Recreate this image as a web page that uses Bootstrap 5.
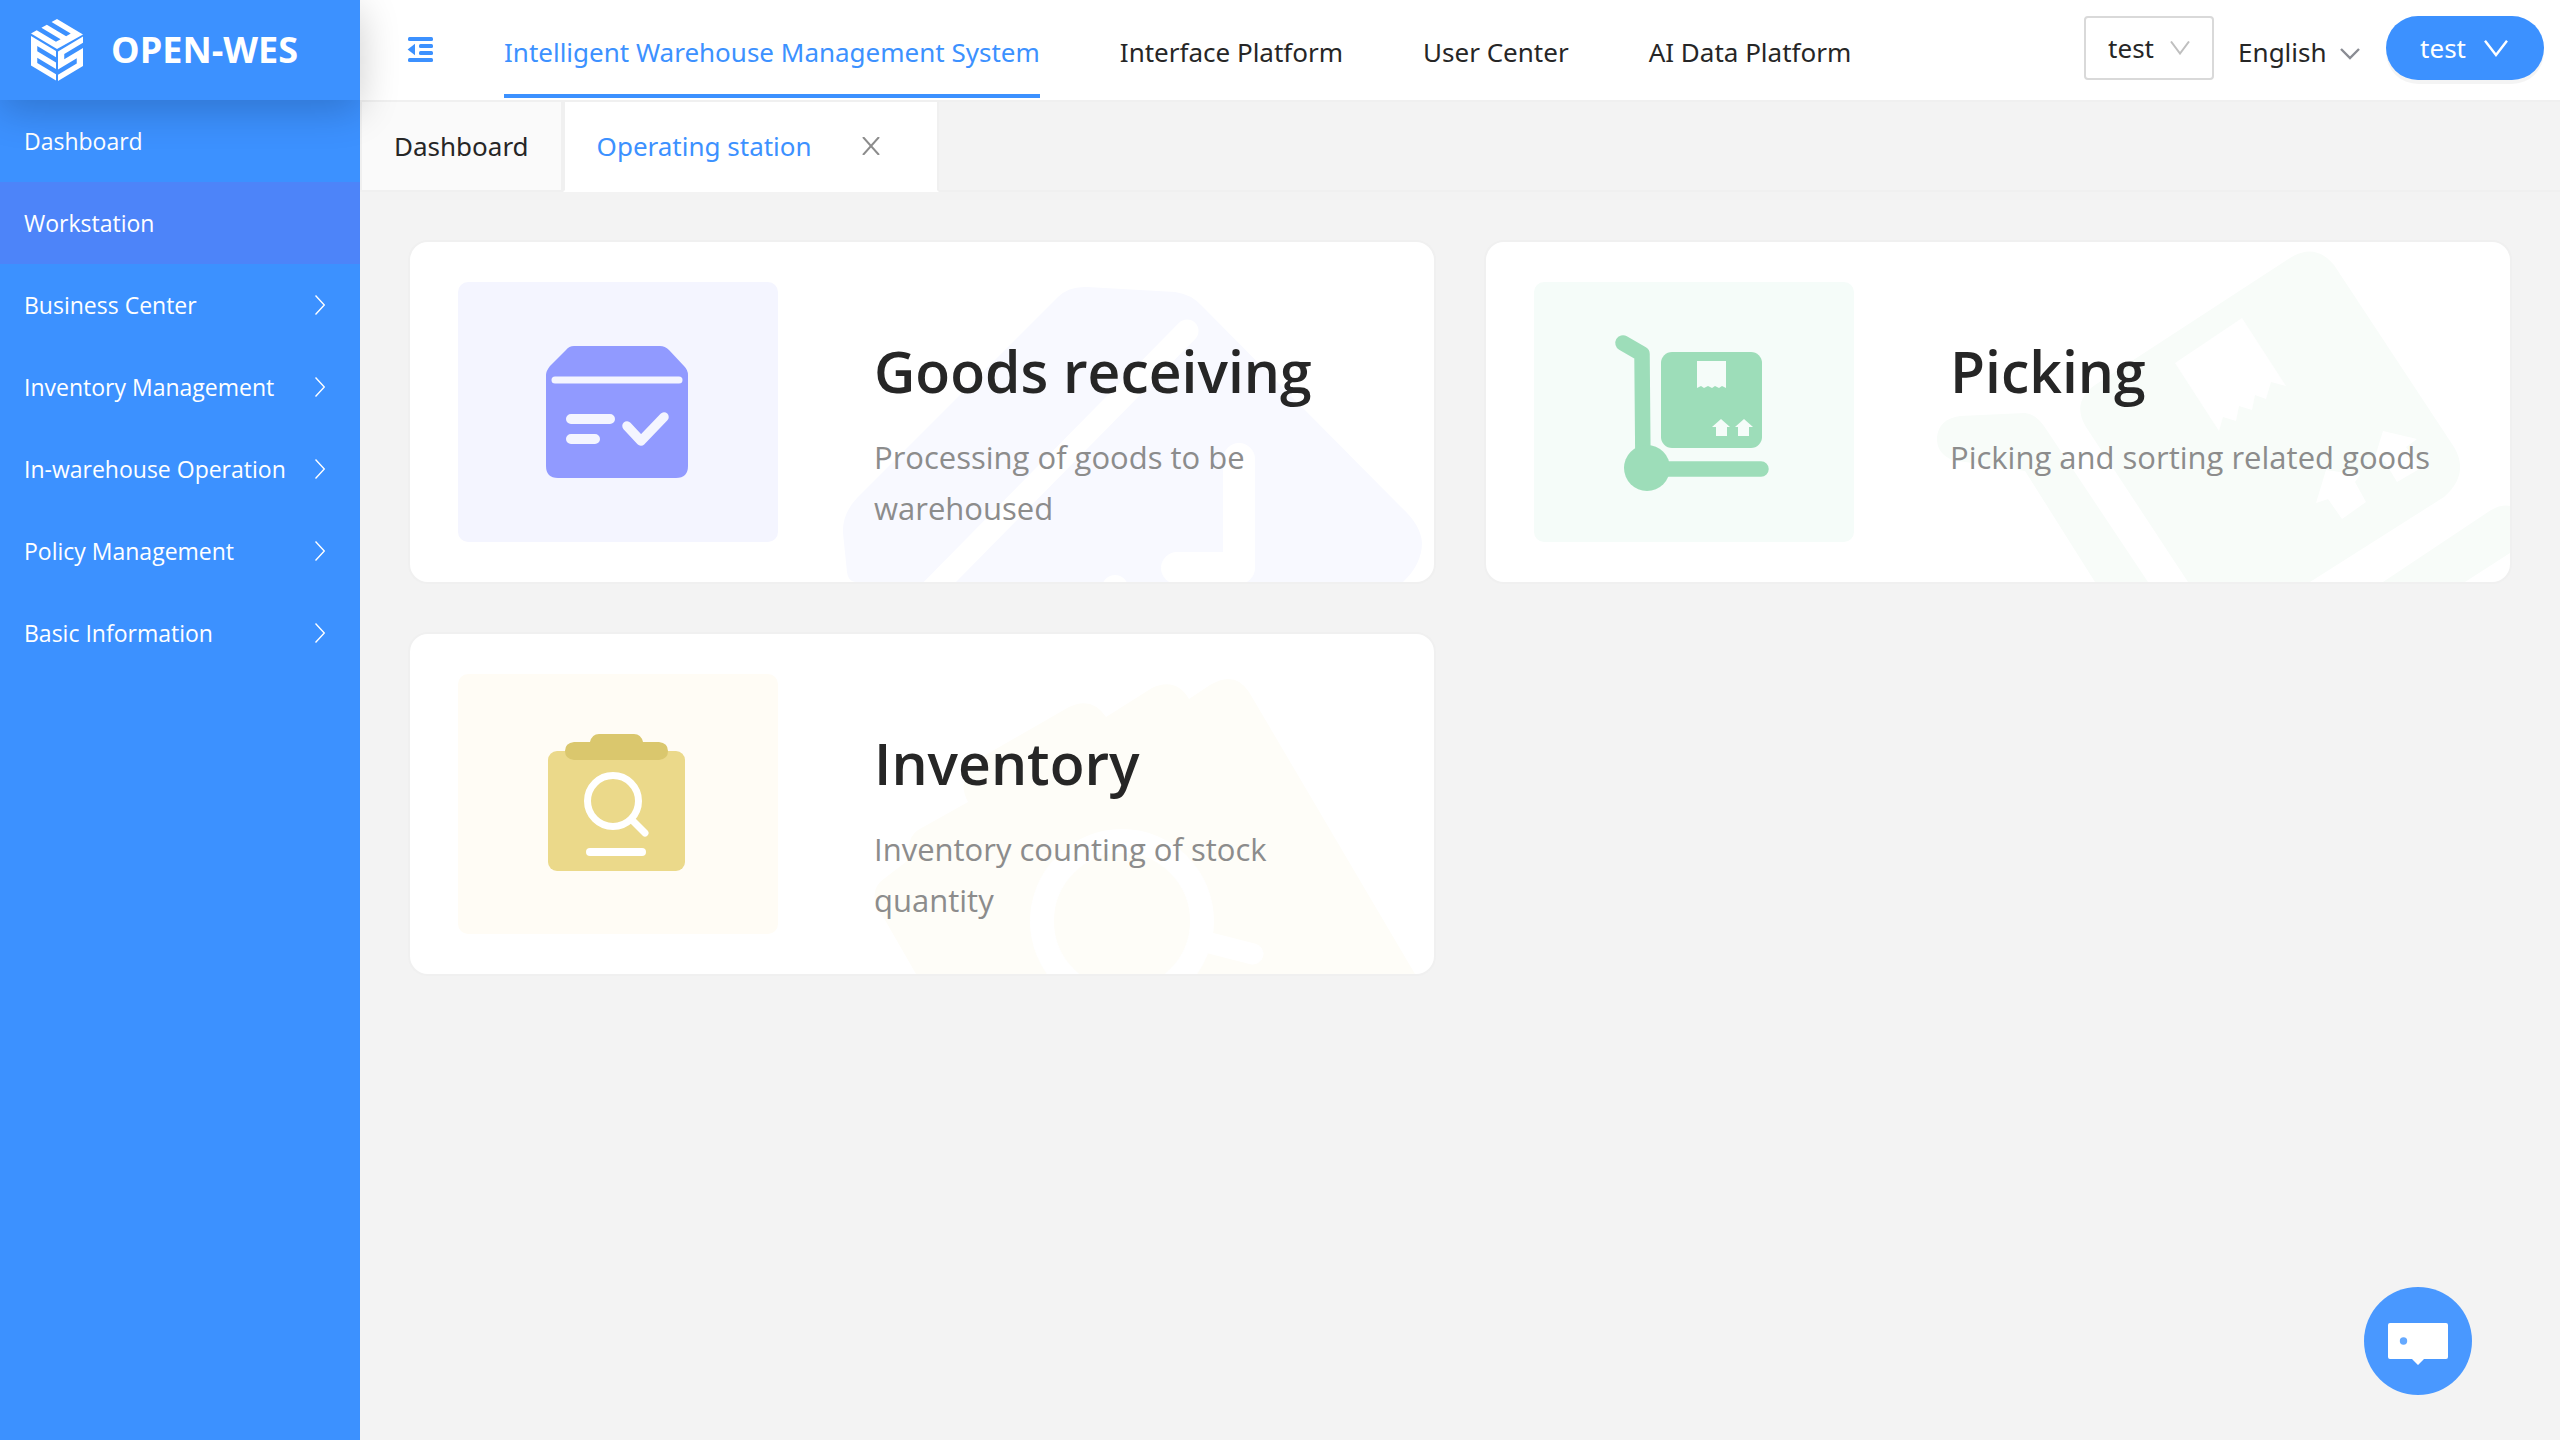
<!DOCTYPE html>
<html lang="en">
<head>
<meta charset="utf-8">
<meta name="viewport" content="width=device-width, initial-scale=1">
<title>OPEN-WES</title>
<link href="https://cdn.jsdelivr.net/npm/bootstrap@5.3.0/dist/css/bootstrap.min.css" rel="stylesheet">
<style>
  :root { --wes-blue: #3c91ff; --wes-line: #f0f0f0; --wes-ink: #262626; }
  body { font-family: "Noto Sans", "Open Sans", sans-serif; font-size: 26px; line-height: 40px; color: var(--wes-ink); background: #f3f3f3; }
  svg { display: block; flex: none; }
  .wes-side, .wes-body { font-family: "Open Sans", "Noto Sans", sans-serif; }
  .wes-side { width: 360px; background: var(--wes-blue); }
  .wes-brand { height: 100px; padding-left: 31px; gap: 28px; background: var(--wes-blue); color: #fff; font-size: 36px; font-weight: 700; box-shadow: 0 10px 40px rgba(0,0,0,.2); z-index: 3; }
  .wes-brand:hover { color: #fff; }
  .wes-menu .nav-link { height: 82px; padding: 0 35px 0 24px; font-size: 23px; color: #fff; }
  .wes-menu .nav-link.active { background: #4d84f9; }
  .wes-head { height: 102px; padding: 0 16px 0 47px; background: #fff; border-bottom: 2px solid var(--wes-line); }
  .wes-top { gap: 80px; margin-left: 71px; }
  .wes-top .nav-link { height: 98px; padding: 10px 0 0; border-bottom: 4px solid transparent; color: var(--wes-ink); }
  .wes-top .nav-link.active { color: var(--wes-blue); border-bottom-color: var(--wes-blue); }
  .wes-pick { appearance: none; height: 64px; border: 0; background: transparent; color: var(--wes-ink); }
  .wes-site { width: 130px; padding: 0 22px; border: 2px solid #d9d9d9; border-radius: 4px; }
  .wes-lang { width: 122px; padding: 8px 0 0; }
  .wes-arrow { top: 0; bottom: 0; margin: auto 0; pointer-events: none; }
  .wes-low { top: 12px; }
  .wes-user { height: 64px; padding: 0 36px 0 34px; margin-left: 26px; gap: 18px; border: 0; border-radius: 32px; background: var(--wes-blue); color: #fff; font-size: 26px; box-shadow: 0 4px 0 rgba(0,0,0,.045); }
  .wes-tabs { height: 90px; box-shadow: inset 0 -2px 0 var(--wes-line); }
  .wes-tab { padding: 0 32px; border: solid var(--wes-line); border-width: 0 2px 2px; background: #fafafa; }
  .wes-tab a { color: var(--wes-ink); }
  .wes-tab.active { padding-right: 57px; gap: 50px; background: #fff; border-bottom-color: #fff; }
  .wes-tab.active a { color: var(--wes-blue); }
  .wes-body { padding: 48px; }
  .wes-grid { --bs-gutter-x: 48px; --bs-gutter-y: 48px; }
  .wes-card { padding: 40px 48px; gap: 96px; border: 2px solid var(--wes-line); border-radius: 20px; background: #fff; color: inherit; }
  .wes-card:hover { color: inherit; }
  .wes-ghost { right: 0; bottom: 0; }
  .wes-tile { border-radius: 10px; }
  .wes-copy { padding: 46px 16px 0 0; }
  .wes-copy h2 { margin: 0 0 18px; font-size: 57px; line-height: 86px; font-weight: 600; }
  .wes-copy p { margin: 0; font-size: 31px; line-height: 51px; color: #8c8c8c; }
  .wes-chat { right: 88px; bottom: 45px; width: 108px; height: 108px; background: #4998ff; }
</style>
<script src="https://cdn.jsdelivr.net/npm/bootstrap@5.3.0/dist/js/bootstrap.bundle.min.js"></script>
</head>
<body>
<div class="d-flex min-vh-100">
  <aside class="wes-side flex-shrink-0">
    <a href="#" class="wes-brand position-relative d-flex align-items-center text-decoration-none">
      <svg width="52" height="62" viewBox="0 0 52 62" fill="#fff" aria-hidden="true">
        <path transform="matrix(26 -14.5 26 15.5 0 14.5)" d="M0 0H.22V.74H.4V0H.61V.74H.79V0H1V1H0Z"/>
        <path transform="matrix(25 15 0 29.5 0 17)" d="M0 0H1V.21H.25V.39H1V.61H.25V.79H1V1H0Z"/>
        <path transform="matrix(25 -15 0 29.5 27 32.5)" d="M0 0H1V.21H.25V.39H1V1H0V.79H.75V.61H0Z"/>
      </svg>
      <span>OPEN-WES</span>
    </a>
    <nav class="wes-menu nav flex-column" aria-label="Main menu">
      <a class="nav-link d-flex align-items-center" href="#">Dashboard</a>
      <a class="nav-link active d-flex align-items-center" href="#" aria-current="page">Workstation</a>
      <a class="nav-link d-flex align-items-center justify-content-between" href="#">Business Center<svg width="10" height="20" fill="none" stroke="#fff" stroke-width="1.4"><path d="M.5.5 9.3 10 .5 19.5"/></svg></a>
      <a class="nav-link d-flex align-items-center justify-content-between" href="#">Inventory Management<svg width="10" height="20" fill="none" stroke="#fff" stroke-width="1.4"><path d="M.5.5 9.3 10 .5 19.5"/></svg></a>
      <a class="nav-link d-flex align-items-center justify-content-between" href="#">In-warehouse Operation<svg width="10" height="20" fill="none" stroke="#fff" stroke-width="1.4"><path d="M.5.5 9.3 10 .5 19.5"/></svg></a>
      <a class="nav-link d-flex align-items-center justify-content-between" href="#">Policy Management<svg width="10" height="20" fill="none" stroke="#fff" stroke-width="1.4"><path d="M.5.5 9.3 10 .5 19.5"/></svg></a>
      <a class="nav-link d-flex align-items-center justify-content-between" href="#">Basic Information<svg width="10" height="20" fill="none" stroke="#fff" stroke-width="1.4"><path d="M.5.5 9.3 10 .5 19.5"/></svg></a>
    </nav>
  </aside>

  <div class="flex-grow-1">
    <header class="wes-head d-flex align-items-center">
      <button type="button" class="btn p-0 border-0" aria-label="Collapse menu">
        <svg width="26" height="26" viewBox="0 0 26 26" fill="#3c91ff"><rect x="1" width="25" height="4" rx="1.5"/><rect x="12" y="7" width="14" height="4" rx="1.5"/><rect x="12" y="14" width="14" height="4" rx="1.5"/><rect x="1" y="21" width="25" height="4" rx="1.5"/><path d="M.6 12.5 8 6.8V18.2Z"/></svg>
      </button>
      <nav class="wes-top nav flex-nowrap align-self-start" aria-label="Systems">
        <a class="nav-link active d-flex align-items-center" href="#" aria-current="page">Intelligent Warehouse Management System</a>
        <a class="nav-link d-flex align-items-center" href="#">Interface Platform</a>
        <a class="nav-link d-flex align-items-center" href="#">User Center</a>
        <a class="nav-link d-flex align-items-center" href="#">AI Data Platform</a>
      </nav>
      <div class="d-flex ms-auto align-self-start pt-3">
        <div class="position-relative">
          <select class="wes-pick wes-site" aria-label="Warehouse"><option>test</option></select>
          <svg class="wes-arrow position-absolute end-0 me-4" width="20" height="14" fill="none" stroke="#bfbfbf" stroke-width="2"><path d="M1 .5 10 12.5 19 .5"/></svg>
        </div>
        <div class="position-relative ms-4">
          <select class="wes-pick wes-lang" aria-label="Language"><option>English</option></select>
          <svg class="wes-arrow wes-low position-absolute end-0" width="20" height="12" fill="none" stroke="#8a8c93" stroke-width="2.4"><path d="M1 1 10 10 19 1"/></svg>
        </div>
        <button type="button" class="wes-user d-flex align-items-center">test
          <svg width="24" height="17" fill="none" stroke="#fff" stroke-width="2.4"><path d="M1 .8 12 15 23 .8"/></svg>
        </button>
      </div>
    </header>

    <div class="wes-tabs d-flex">
      <div class="wes-tab d-flex align-items-center"><a href="#" class="text-decoration-none">Dashboard</a></div>
      <div class="wes-tab active d-flex align-items-center"><a href="#" class="text-decoration-none">Operating station</a>
        <button type="button" class="btn p-0 border-0" aria-label="Close tab"><svg width="18" height="18" stroke="#8c8c8c" stroke-width="2"><path d="M1 0 17 18M17 0 1 18"/></svg></button>
      </div>
    </div>

    <main class="wes-body">
      <div class="row row-cols-2 wes-grid">
        <div class="col">
          <a href="#" class="wes-card position-relative overflow-hidden d-flex text-decoration-none">
            <svg class="wes-ghost position-absolute" width="620" height="340" viewBox="0 0 620 340" aria-hidden="true">
              <path fill="#f8f9ff" d="M41 340Q34 339 33 330L29 291Q28 272 43 256L244 55Q255 44 273 45L361 50Q377 52 388 64L587 265Q607 283 608 301Q608 322 589 340Z"/>
              <g fill="none" stroke="#fff" stroke-linecap="round" stroke-linejoin="round"><path stroke-width="23" d="M373 89 116 350"/><path stroke-width="32" d="M425 217V326H363"/></g>
              <circle cx="301" cy="346" r="13" fill="#fff"/>
            </svg>
            <svg class="wes-tile position-relative" width="320" height="260" aria-hidden="true">
              <rect width="320" height="260" fill="#f4f5ff"/>
              <path fill="#919aff" d="M88 93Q88 89 92 84L108 68Q111 64 116 64H202Q207 64 211 68L226 84Q230 88 230 93V184Q230 196 218 196H100Q88 196 88 184Z"/>
              <g fill="none" stroke="#f4f5ff" stroke-linecap="round" stroke-linejoin="round"><path stroke-width="7" d="M97 98H221"/><path stroke-width="10" d="M113 137H152M113 157H137"/><path stroke-width="9.5" d="M169 144 183 159 206 135"/></g>
            </svg>
            <div class="wes-copy position-relative"><h2>Goods receiving</h2><p>Processing of goods to be warehoused</p></div>
          </a>
        </div>
        <div class="col">
          <a href="#" class="wes-card position-relative overflow-hidden d-flex text-decoration-none">
            <svg class="wes-ghost position-absolute" width="620" height="340" viewBox="0 0 620 340" aria-hidden="true">
              <g fill="#f8fcf9"><path d="M47 195Q49 177 70 174L135 171Q147 172 156 187L258 340H205L135 229 62 218Q46 211 47 195Z"/>
              <path d="M400 16Q425 0 444 23L564 205Q580 232 554 255L420 340H298L196 185Q181 160 205 143Z"/>
              <path d="M493 340 598 270Q610 262 620 264V311L575 340Z"/></g>
              <g fill="#fff"><path d="M352 76 396 144 381 140 376 157 365 153 362 168 349 164 346 179 333 175 329 189 285 121Z"/>
              <path d="M493 189 527 197 516 205 531 226 507 240 495 220 484 218Z"/><path d="M436 228 470 233 465 240 476 260 452 277 438 257 426 261Z"/></g>
            </svg>
            <svg class="wes-tile position-relative" width="320" height="260" aria-hidden="true">
              <rect width="320" height="260" fill="#f5fcf9"/>
              <path fill="none" stroke="#9dddb9" stroke-width="15.5" stroke-linecap="round" stroke-linejoin="round" d="M89 61 108 72 109 187H227"/>
              <circle cx="113" cy="186" r="23" fill="#9dddb9"/><rect x="127" y="70" width="101" height="96" rx="11" fill="#9dddb9"/>
              <path fill="#f5fcf9" d="M163 79H192V106L188 104 185 106 181 104 178 106 174 104 170 106 167 104 163 106ZM187 137 196 145H193V154H182V145H178ZM210 137 219 145H215V154H204V145H201Z"/>
            </svg>
            <div class="wes-copy position-relative"><h2>Picking</h2><p>Picking and sorting related goods</p></div>
          </a>
        </div>
        <div class="col">
          <a href="#" class="wes-card position-relative overflow-hidden d-flex text-decoration-none">
            <svg class="wes-ghost position-absolute" width="620" height="340" viewBox="0 0 620 340" aria-hidden="true">
              <path fill="#fefdf8" d="M396 51Q421 36 435 58L601 340H102L71 286Q50 258 71 244L97 224Q91 205 104 196L154 168Q139 141 175 119L255 73Q278 62 292 83L338 54Q362 43 375 65Z"/>
              <circle cx="308" cy="287" r="80" fill="none" stroke="#fff" stroke-width="24"/><path stroke="#fff" stroke-width="21" stroke-linecap="round" d="M392 308 439 320"/>
            </svg>
            <svg class="wes-tile position-relative" width="320" height="260" aria-hidden="true">
              <rect width="320" height="260" fill="#fffcf5"/>
              <rect x="90" y="77" width="137" height="120" rx="9" fill="#ebd98a"/>
              <path fill="#dac76d" d="M116 68H132Q134 60 141 60H176Q183 60 185 68H201Q210 69 210 77T201 86H116Q107 85 107 77T116 68Z"/>
              <g fill="none" stroke="#fff" stroke-linecap="round"><circle cx="155" cy="127" r="25.5" stroke-width="7"/><path stroke-width="7" d="M175 147 187 159"/><path stroke-width="8" d="M132 178H184"/></g>
            </svg>
            <div class="wes-copy position-relative"><h2>Inventory</h2><p>Inventory counting of stock quantity</p></div>
          </a>
        </div>
      </div>
    </main>
  </div>
</div>
<button type="button" class="wes-chat btn p-0 border-0 rounded-circle position-fixed" aria-label="Open chat">
  <svg width="108" height="108" viewBox="0 0 108 108" fill="#fff"><path d="M26 36H82Q84 36 84 38V70Q84 72 82 72H60L54 78 48 72H26Q24 72 24 70V38Q24 36 26 36Z"/><circle cx="39.5" cy="54" r="3.7" fill="#65a9ff"/></svg>
</button>
</body>
</html>
